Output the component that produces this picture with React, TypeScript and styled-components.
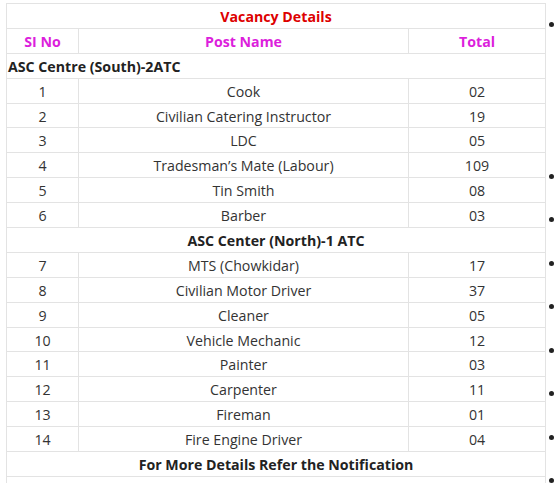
import styled, { createGlobalStyle } from "styled-components";

interface IPost {
  no: number;
  name: string;
  total: string;
}

interface ISection {
  title: string;
  align: "left" | "center";
  posts: IPost[];
}

const sections: ISection[] = [
  {
    title: "ASC Centre (South)-2ATC",
    align: "left",
    posts: [
      { no: 1, name: "Cook", total: "02" },
      { no: 2, name: "Civilian Catering Instructor", total: "19" },
      { no: 3, name: "LDC", total: "05" },
      { no: 4, name: "Tradesman’s Mate (Labour)", total: "109" },
      { no: 5, name: "Tin Smith", total: "08" },
      { no: 6, name: "Barber", total: "03" },
    ],
  },
  {
    title: "ASC Center (North)-1 ATC",
    align: "center",
    posts: [
      { no: 7, name: "MTS (Chowkidar)", total: "17" },
      { no: 8, name: "Civilian Motor Driver", total: "37" },
      { no: 9, name: "Cleaner", total: "05" },
      { no: 10, name: "Vehicle Mechanic", total: "12" },
      { no: 11, name: "Painter", total: "03" },
      { no: 12, name: "Carpenter", total: "11" },
      { no: 13, name: "Fireman", total: "01" },
      { no: 14, name: "Fire Engine Driver", total: "04" },
    ],
  },
];

// bullets of the list beside the table, the text itself runs off the page
const sideItems = [7, 2, 2, 2, 2, 2, 2, 2, 2];

const GlobalStyle = createGlobalStyle`
  body {
    margin: 0;
    overflow: hidden;
    background: #fff;
    font-family: "Open Sans", "Noto Sans", sans-serif;
    color: #333;
  }
`;

export default function App() {
  return (
    <>
      <GlobalStyle />
      <Page>
        <Table>
          <colgroup>
            <col style={{ width: 72 }} />
            <col style={{ width: 330 }} />
            <col style={{ width: 137 }} />
          </colgroup>
          <tbody>
            <Row>
              <Title colSpan={3}>Vacancy Details</Title>
            </Row>
            <Row>
              <Head>SI No</Head>
              <Head>Post Name</Head>
              <Head>Total</Head>
            </Row>
            {sections.map((section) => (
              <SectionRows key={section.title} section={section} />
            ))}
            <Row>
              <Strong colSpan={3} $align="center">
                For More Details Refer the Notification
              </Strong>
            </Row>
            <Row>
              <Cell colSpan={3} />
            </Row>
          </tbody>
        </Table>
        <SideList>
          {sideItems.map((lines, i) => (
            <SideItem key={i} $lines={lines} />
          ))}
        </SideList>
      </Page>
    </>
  );
}

const SectionRows = ({ section }: { section: ISection }) => (
  <>
    <Row>
      <Strong colSpan={3} $align={section.align}>
        {section.title}
      </Strong>
    </Row>
    {section.posts.map((post) => (
      <Row key={post.no}>
        <Cell>{post.no}</Cell>
        <Cell>{post.name}</Cell>
        <Cell>{post.total}</Cell>
      </Row>
    ))}
  </>
);

const Page = styled.div`
  display: flex;
  align-items: flex-start;
  padding: 3px 0 0 6px;
  width: 600px;
`;

const Table = styled.table`
  border-collapse: collapse;
  table-layout: fixed;
  width: 540px;
  flex-shrink: 0;
  font-size: 14.2px;
`;

const Row = styled.tr`
  height: 24.9px;
`;

const Cell = styled.td`
  border: 1px solid #e3e3e3;
  padding: 2px 4px 0;
  text-align: center;
  line-height: 20px;
  white-space: nowrap;
  color: #333;
`;

const Title = styled(Cell)`
  font-weight: 700;
  color: #dd0000;
`;

const Head = styled(Cell)`
  font-weight: 700;
  color: #dc1fdc;
`;

const Strong = styled(Cell)<{ $align: "left" | "center" }>`
  font-weight: 700;
  color: #222;
  text-align: ${(p) => p.$align};
  padding-left: ${(p) => (p.$align === "left" ? "1px" : "4px")};
`;

const SideList = styled.ul`
  list-style: none;
  margin: 0;
  padding: 10px 0 0 3px;
  display: flex;
  flex-direction: column;
`;

const SideItem = styled.li<{ $lines: number }>`
  position: relative;
  height: ${(p) => p.$lines * 21.75}px;
  width: 40px;

  &::before {
    content: "";
    position: absolute;
    left: 0;
    top: 8.5px;
    width: 5px;
    height: 5px;
    border-radius: 50%;
    background: #222;
  }
`;
